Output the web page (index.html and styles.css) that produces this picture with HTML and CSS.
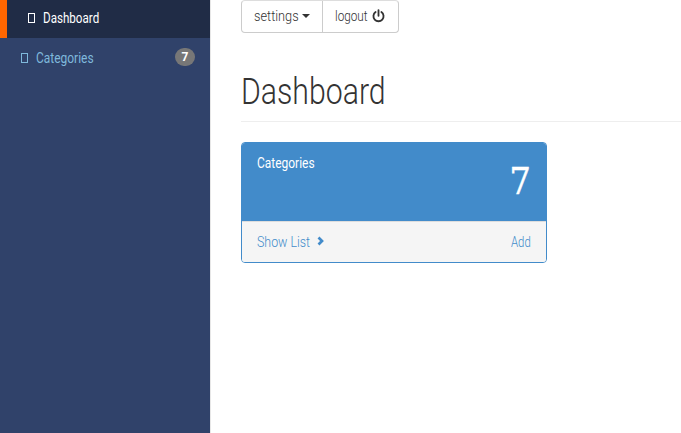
FILE: index.html
```html
<!DOCTYPE html>
<html lang="en">
<head>
<meta charset="utf-8">
<title>Dashboard</title>
<link rel="stylesheet" href="styles.css">
</head>
<body>
<div class="layout">
  <nav class="sidebar">
    <a class="nav-item active"><i class="glyph"></i><span class="label nav-dashboard"><span>Dashboard</span></span></a>
    <a class="nav-item"><i class="glyph"></i><span class="label nav-categories"><span>Categories</span></span><span class="badge">7</span></a>
  </nav>
  <main class="content">
    <div class="btn-group">
      <a class="btn settings"><span class="label settings-text"><span>settings</span></span><i class="caret"></i></a>
      <a class="btn logout"><span class="label logout-text"><span>logout</span></span><svg class="power" viewBox="0 0 12 13"><path d="M3.3 2.8A4.7 4.7 0 1 0 8.7 2.8M6 1v5.3" fill="none" stroke="currentColor" stroke-width="1.7" stroke-linecap="round"/></svg></a>
    </div>
    <h1><span>Dashboard</span></h1>
    <section class="panel">
      <div class="panel-heading"><span class="label panel-title"><span>Categories</span></span><span class="count">7</span></div>
      <div class="panel-footer"><span class="label show-list"><span>Show List</span></span><svg class="chevron" viewBox="0 0 8 10"><path d="M1.5 1.5 5 5 1.5 8.5" fill="none" stroke="currentColor" stroke-width="2.7"/></svg><span class="label add"><span>Add</span></span></div>
    </section>
  </main>
</div>
</body>
</html>
```
FILE: styles.css
```css
* { box-sizing: border-box; }
body { margin: 0; background: #fff; font: 14px/20px Roboto, sans-serif; color: #333; overflow: hidden; }
.layout { display: flex; height: 433px; }
.sidebar { width: 211px; background: #30426a; border-right: 1px solid #e7e7e7; flex: none; }
.label { display: inline-block; white-space: nowrap; flex: none; }
.label > span { display: inline-block; transform: scaleX(.84); transform-origin: left; }
.nav-item { display: flex; align-items: center; height: 40px; padding: 0 15px 0 21px; color: #7fb9dc; }
.nav-item.active { height: 38px; padding: 0 15px 2px 21px; border-left: 7px solid #f60; background: #202c46; color: #fff; }
.glyph { width: 7px; height: 10px; border: 1px solid currentColor; margin-right: 8px; }
.nav-dashboard { width: 57px; }
.nav-dashboard > span { transform: scaleX(.83); }
.nav-categories { width: 58px; }
.nav-categories > span, .panel-title > span { transform: scaleX(.855); }
.badge { width: 20px; height: 18px; margin-left: auto; margin-top: -2px; border-radius: 9px; background: #777; color: #fff; font-size: 12px; font-weight: 700; line-height: 19px; text-align: center; }
.content { flex: 1; padding-left: 30px; }
.btn-group { display: flex; width: 158px; height: 33px; border: 1px solid #ccc; border-top-color: #ddd; border-radius: 4px; }
.btn { display: flex; align-items: center; padding-left: 12px; padding-bottom: 1px; font-weight: 300; }
.settings { width: 81px; border-right: 1px solid #ccc; }
.settings-text { width: 48px; }
.settings-text > span { transform: scaleX(.91); }
.logout-text { width: 37px; }
.caret { border: 4px solid transparent; border-top-color: #333; border-bottom: 0; }
.power { width: 13px; height: 14px; margin-top: -1px; }
h1 { height: 69px; margin: 20px 0 20px; padding-top: 19px; border-bottom: 1px solid #eee; font-size: 36px; font-weight: 300; line-height: 41px; }
h1 span { display: inline-block; transform: scaleX(.84); transform-origin: left; }
.panel { width: 306px; height: 121px; border: 1px solid #428bca; border-radius: 4px; overflow: hidden; }
.panel-heading { display: flex; justify-content: space-between; height: 78px; padding: 10px 15px; background: #428bca; color: #fff; }
.count { font: 38px/57px "DejaVu Serif Condensed", "DejaVu Serif", serif; -webkit-text-stroke: .3px #fff; }
.panel-footer { display: flex; align-items: center; height: 41px; padding: 0 15px; border-top: 1px solid #ddd; background: #f5f5f5; color: #428bca; font-weight: 300; }
.show-list { width: 60px; }
.show-list > span { transform: scaleX(.885); }
.chevron { width: 8px; height: 10px; margin-top: -2px; }
.add { width: 20px; margin-left: auto; }
.add > span { transform: scaleX(.81); }
```
